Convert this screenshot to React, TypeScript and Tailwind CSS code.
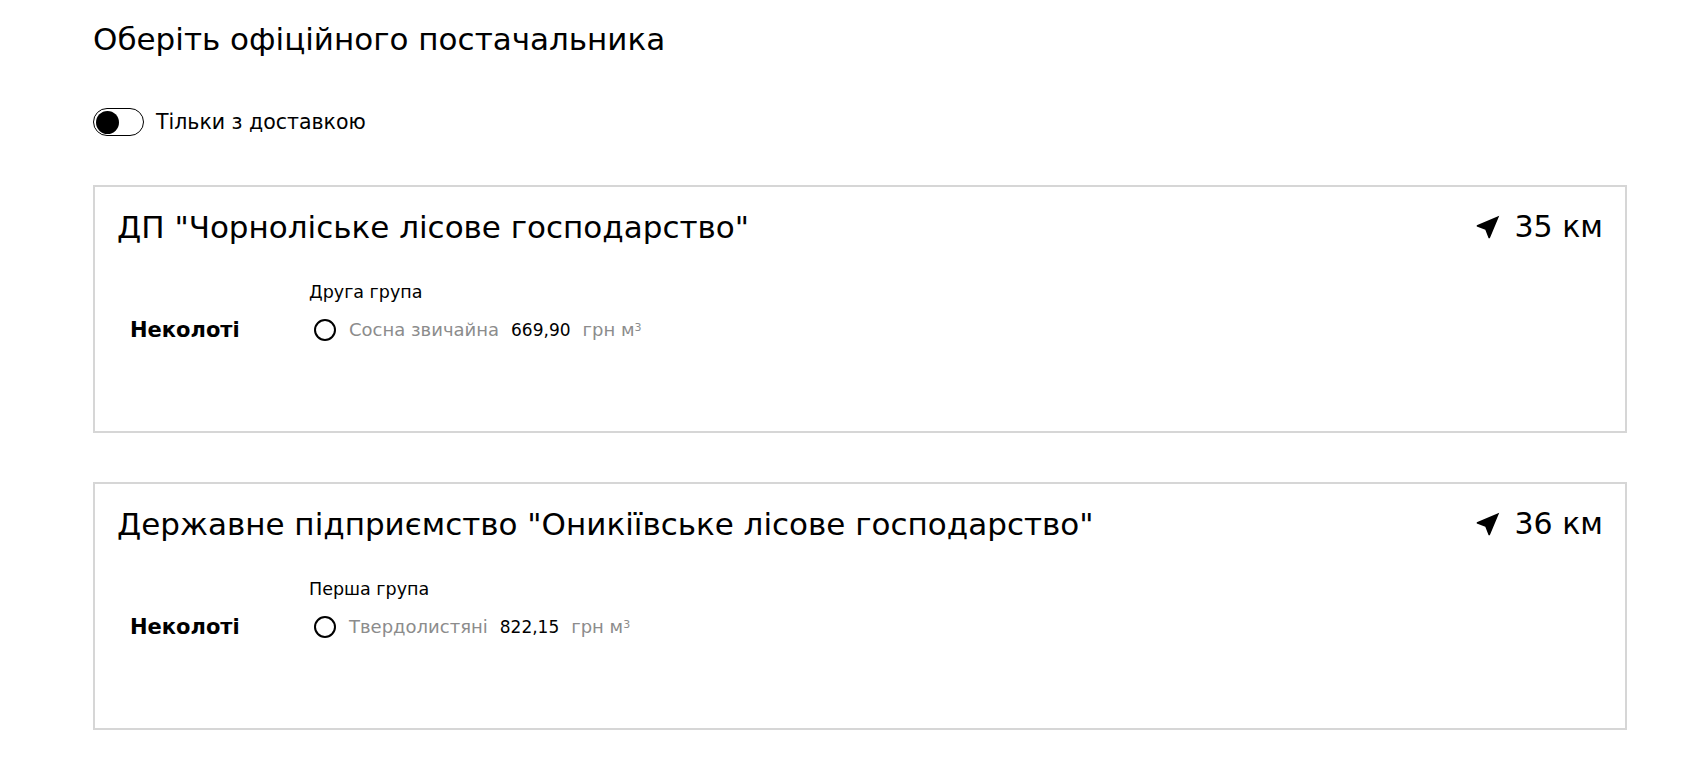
import React from 'react';

type Offer = {
  name: string;
  distance: string;
  group: string;
  kind: string;
  species: string;
  price: string;
};

const offers: Offer[] = [
  {
    name: 'ДП "Чорноліське лісове господарство"',
    distance: '35 км',
    group: 'Друга група',
    kind: 'Неколоті',
    species: 'Сосна звичайна',
    price: '669,90',
  },
  {
    name: 'Державне підприємство "Оникіївське лісове господарство"',
    distance: '36 км',
    group: 'Перша група',
    kind: 'Неколоті',
    species: 'Твердолистяні',
    price: '822,15',
  },
];

const NearMe: React.FC = () => (
  <svg width="30" height="30" viewBox="0 0 24 24" fill="currentColor">
    <path d="M21 3L3 10.53v.98l6.84 2.65L12.48 21h.98L21 3z" />
  </svg>
);

const SupplierCard: React.FC<{ offer: Offer }> = ({ offer }) => {
  return (
    <div className="h-[248px] border-2 border-[#d6d6d6] bg-white px-[22px] pt-[22px]">
      <div className="flex items-center justify-between">
        <h2 className="text-[31px] leading-9 text-black">{offer.name}</h2>
        <div className="flex items-center gap-3 text-[30px] leading-9 text-black">
          <NearMe />
          <span>{offer.distance}</span>
        </div>
      </div>

      <div className="mt-[37px] grid grid-cols-[179px_1fr] pl-[13px]">
        <div />
        <div className="text-[17.5px] leading-5 text-black">{offer.group}</div>
        <div className="mt-4 flex items-center text-[21px] font-bold leading-6 text-black">
          {offer.kind}
        </div>
        <div className="mt-4 flex items-center text-[18px] leading-6">
          <span className="ml-[5px] h-[22px] w-[22px] rounded-full border-2 border-black" />
          <span className="ml-[13px] text-[#8c8c8c]">{offer.species}</span>
          <span className="ml-3 text-[17px] text-black">{offer.price}</span>
          <span className="ml-3 text-[#8c8c8c]">
            грн м<sup className="text-[11px]">3</sup>
          </span>
        </div>
      </div>
    </div>
  );
};

export default function App() {
  return (
    <div
      className="min-h-screen bg-white"
      style={{ fontFamily: '"DejaVu Sans", "Liberation Sans", sans-serif' }}
    >
      <div className="ml-[93px] w-[1534px] pt-[21px]">
        <h1 className="text-[31px] leading-9 text-black">Оберіть офіційного постачальника</h1>

        <label className="mt-[51px] flex items-center gap-3">
          <span className="flex h-[28px] w-[51px] items-center rounded-full border border-black px-[2px]">
            <span className="h-[23px] w-[23px] rounded-full bg-black" />
          </span>
          <span className="text-[20.5px] leading-7 text-black">Тільки з доставкою</span>
        </label>

        <div className="mt-[49px] flex flex-col gap-[49px]">
          {offers.map((o) => (
            <SupplierCard key={o.name} offer={o} />
          ))}
        </div>
      </div>
    </div>
  );
}
